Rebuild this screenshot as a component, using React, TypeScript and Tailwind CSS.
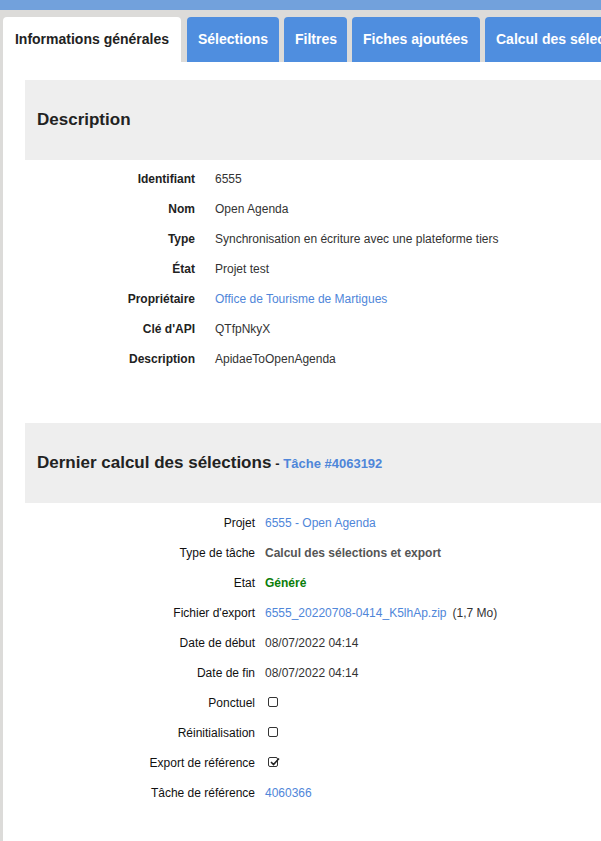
import React from 'react';

type Row = { label: string; value: React.ReactNode };

const link = 'text-[#4f86d9]';

const descriptionRows: Row[] = [
    { label: 'Identifiant', value: '6555' },
    { label: 'Nom', value: 'Open Agenda' },
    { label: 'Type', value: 'Synchronisation en écriture avec une plateforme tiers' },
    { label: 'État', value: 'Projet test' },
    { label: 'Propriétaire', value: <span className={link}>Office de Tourisme de Martigues</span> },
    { label: "Clé d'API", value: 'QTfpNkyX' },
    { label: 'Description', value: 'ApidaeToOpenAgenda' },
];

const Box: React.FC<{ checked?: boolean }> = ({ checked }) => (
    <span className="relative inline-block w-[10px] h-[10px] rounded-[2px] border border-[#333] bg-white">
        {checked && (
            <svg viewBox="0 0 10 10" className="absolute left-[1px] -top-[1px] w-[10px] h-[10px]">
                <path d="M1 5 L3.5 7.5 L9 1.5" fill="none" stroke="#222" strokeWidth="1.6" />
            </svg>
        )}
    </span>
);

const taskRows: Row[] = [
    { label: 'Projet', value: <span className={link}>6555 - Open Agenda</span> },
    { label: 'Type de tâche', value: <span className="font-bold text-[#555]">Calcul des sélections et export</span> },
    { label: 'Etat', value: <span className="font-bold text-[#0a7d0a]">Généré</span> },
    {
        label: "Fichier d'export",
        value: (
            <>
                <span className={link}>6555_20220708-0414_K5lhAp.zip</span>
                <span className="ml-[6px]">(1,7 Mo)</span>
            </>
        ),
    },
    { label: 'Date de début', value: '08/07/2022 04:14' },
    { label: 'Date de fin', value: '08/07/2022 04:14' },
    { label: 'Ponctuel', value: <span className="pl-[3px]"><Box /></span> },
    { label: 'Réinitialisation', value: <span className="pl-[3px]"><Box /></span> },
    { label: 'Export de référence', value: <span className="pl-[3px]"><Box checked /></span> },
    { label: 'Tâche de référence', value: <span className={link}>4060366</span> },
];

// tab labels with their widths from the reference
const tabs = [
    { label: 'Sélections', w: 'w-[92px]' },
    { label: 'Filtres', w: 'w-[63px]' },
    { label: 'Fiches ajoutées', w: 'w-[128px]' },
    { label: 'Calcul des sélections', w: 'w-[170px]' },
];

export default function App() {
    return (
        <div className="min-h-screen bg-[#dcdbd9] font-['Liberation_Sans',Arial,sans-serif] overflow-hidden">
            {/* top bar */}
            <div className="h-[10px] bg-[#72a1dc]"></div>

            {/* tabs */}
            <div className="flex items-end pt-[7px] pl-[3px] gap-[6px] whitespace-nowrap">
                <div className="h-[45px] w-[178px] shrink-0 flex items-center justify-center bg-white rounded-t-[4px] text-[14px] font-bold text-[#222]">
                    Informations générales
                </div>
                <div className="flex items-end gap-[5px]">
                    {tabs.map((t) => (
                        <div
                            key={t.label}
                            className={`h-[45px] ${t.w} pl-[11px] flex items-center bg-[#4f8edf] rounded-t-[4px] text-[14px] font-bold text-white shrink-0`}
                        >
                            {t.label}
                        </div>
                    ))}
                </div>
            </div>

            {/* panel */}
            <div className="ml-[3px] bg-white pt-[18px] pl-[22px] pb-[40px] min-h-[779px] text-[12px] text-[#333]">
                <div className="h-[80px] bg-[#eeeeee] flex items-center pl-[12px]">
                    <h2 className="text-[17px] font-bold text-[#222]">Description</h2>
                </div>
                <div className="pt-[4px]">
                    {descriptionRows.map((r) => (
                        <div key={r.label} className="h-[30px] flex items-center">
                            <div className="w-[170px] text-right font-bold text-[#222]">{r.label}</div>
                            <div className="pl-[20px]">{r.value}</div>
                        </div>
                    ))}
                </div>

                <div className="mt-[49px] h-[80px] bg-[#eeeeee] flex items-center pl-[12px]">
                    <h2 className="text-[17px] font-bold text-[#222]">
                        Dernier calcul des sélections
                        <span className="text-[13px] ml-[4px]">- </span>
                        <span className={`text-[13px] ${link}`}>Tâche #4063192</span>
                    </h2>
                </div>
                <div className="pt-[5px]">
                    {taskRows.map((r) => (
                        <div key={r.label} className="h-[30px] flex items-center">
                            <div className="w-[230px] text-right text-[#111]">{r.label}</div>
                            <div className="pl-[10px] flex items-center">{r.value}</div>
                        </div>
                    ))}
                </div>
            </div>
        </div>
    );
}
